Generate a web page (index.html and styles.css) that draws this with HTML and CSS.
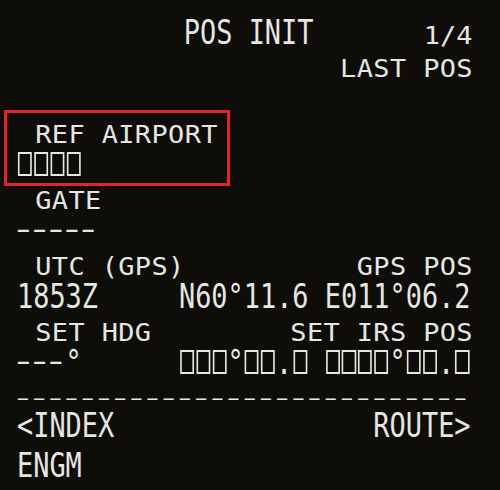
FILE: index.html
```html
<!DOCTYPE html>
<html>
<head>
<meta charset="utf-8">
<link rel="stylesheet" href="styles.css">
</head>
<body>
<div class="frame">
  <div class="screen">
    <div class="row title">          POS INIT       <span class="sm page">1/4</span></div>
    <div class="row sm"><span></span><span>LAST POS</span></div>
    <div class="row"></div>
    <div class="row sm"><span> REF AIRPORT</span></div>
    <div class="row"><span class="box"></span><span class="box"></span><span class="box"></span><span class="box"></span></div>
    <div class="row sm"><span> GATE</span></div>
    <div class="row"><span class="dash">−−−−−</span></div>
    <div class="row sm"><span> UTC (GPS)</span><span>GPS POS</span></div>
    <div class="row">1853Z     N60°11.6 E011°06.2</div>
    <div class="row sm"><span> SET HDG</span><span>SET IRS POS</span></div>
    <div class="row"><span class="dash">−−−</span>°      <span class="box"></span><span class="box"></span><span class="box"></span>°<span class="box"></span><span class="box"></span>.<span class="box"></span> <span class="box"></span><span class="box"></span><span class="box"></span><span class="box"></span>°<span class="box"></span><span class="box"></span>.<span class="box"></span></div>
    <div class="row sep"><span class="dash">−−−−−−−−−−−−−−−−−−−−−−−−−−−−</span></div>
    <div class="row">&lt;INDEX                ROUTE&gt;</div>
    <div class="row scratch">ENGM</div>
  </div>
  <div class="highlight"></div>
</div>
</body>
</html>
```

FILE: styles.css
```css
html, body {
  margin: 0;
  padding: 0;
  background: #0f0d0a;
}

body {
  width: 500px;
  height: 490px;
  overflow: hidden;
}

.frame {
  position: relative;
  width: 500px;
  height: 490px;
  overflow: hidden;
}

.screen {
  width: 28ch;
  transform: scaleX(0.8153);
  transform-origin: 0 0;
  padding: 16px 0 0 20.85px;
  font-family: "DejaVu Sans Mono", monospace;
  font-size: 33px;
  line-height: 33px;
  color: #e6e6e2;
}

.row {
  white-space: pre;
  height: 33px;
}

.title {
  padding-left: 6px;
}

.sm {
  transform: scaleY(0.75);
  transform-origin: 0 27.92px;
}

div.sm {
  display: flex;
  justify-content: space-between;
  letter-spacing: 0.5px;
  padding-left: 2px;
  margin-right: -3px;
}

span.sm {
  display: inline-block;
}

.page {
  margin-left: -3.7px;
}

.sep {
  height: 30px;
  transform: scaleY(0.75);
  transform-origin: 0 27.92px;
}

.scratch {
  margin-top: 7px;
}

.dash {
  font-size: 26px;
  letter-spacing: 4.22px;
  vertical-align: 3px;
}

.sep .dash {
  font-size: 24px;
  letter-spacing: 5.42px;
}

.box {
  display: inline-block;
  width: 17.2px;
  height: 24px;
  margin: 0 1.33px;
  box-sizing: border-box;
  border: 2px solid currentColor;
  border-left-width: 2.45px;
  border-right-width: 2.45px;
}

.highlight {
  position: absolute;
  left: 4px;
  top: 110px;
  width: 226px;
  height: 76px;
  box-sizing: border-box;
  border: 3px solid #e3232a;
}
```
